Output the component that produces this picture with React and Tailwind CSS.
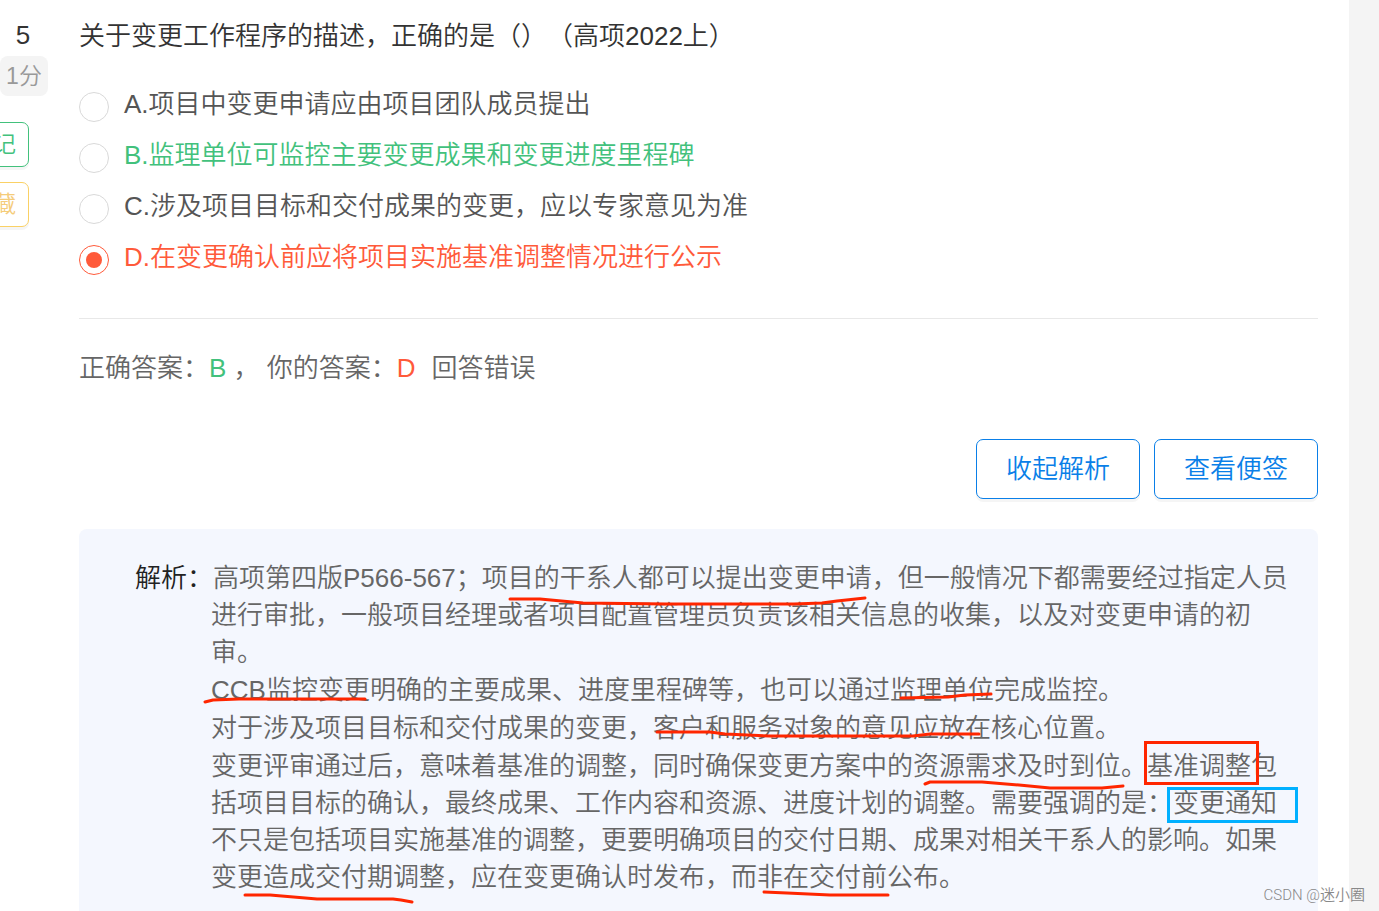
import React from 'react';
import clsx from 'clsx';

const options = [
    { key: 'A', text: '项目中变更申请应由项目团队成员提出' },
    { key: 'B', text: '监理单位可监控主要变更成果和变更进度里程碑' },
    { key: 'C', text: '涉及项目目标和交付成果的变更，应以专家意见为准' },
    { key: 'D', text: '在变更确认前应将项目实施基准调整情况进行公示' },
];

const correctAnswer = 'B';
const userAnswer = 'D';

const analysis = [
    '高项第四版P566-567；项目的干系人都可以提出变更申请，但一般情况下都需要经过指定人员进行审批，一般项目经理或者项目配置管理员负责该相关信息的收集，以及对变更申请的初审。',
    'CCB监控变更明确的主要成果、进度里程碑等，也可以通过监理单位完成监控。',
    '对于涉及项目目标和交付成果的变更，客户和服务对象的意见应放在核心位置。',
    '变更评审通过后，意味着基准的调整，同时确保变更方案中的资源需求及时到位。基准调整包括项目目标的确认，最终成果、工作内容和资源、进度计划的调整。需要强调的是：变更通知不只是包括项目实施基准的调整，更要明确项目的交付日期、成果对相关干系人的影响。如果变更造成交付期调整，应在变更确认时发布，而非在交付前公布。',
];

// Hand-drawn pen marks, relative to the analysis panel
const penStrokes = [
    'M431 70 H461 L504 74 L588 75 H715 L743 74 L758 72 L786 69',
    'M126 173 L134 171 L160 170 H286',
    'M822 169 L869 168 L886 166 L912 165',
    'M578 203 H631 L646 205 L691 207 H834 L851 205 H900',
    'M846 255 L851 253 H903 L940 256 L971 259 H1023 L1044 257',
    'M166 366 L191 366 L238 370 H314 L322 371 L333 373',
    'M685 363 L708 364 L751 366 H809',
];

const SideRail = () => (
    <aside className="flex w-12 shrink-0 flex-col items-start overflow-hidden">
        <div className="mt-4 w-full pr-[2px] text-center text-[26px] leading-[38px] text-[#333]">5</div>
        <div className="mt-[2px] h-10 w-full rounded-lg bg-[#f4f4f4] text-center text-[23px] leading-[40px] text-[#999]">
            1分
        </div>
        <button
            type="button"
            className="mt-[26px] -ml-[43px] h-[45px] w-[72px] shrink-0 rounded-[7px] border border-[#42c17c] bg-white text-[23px] leading-[43px] whitespace-nowrap text-[#42c17c] shadow-[0_3px_0_rgba(0,0,0,0.04)]"
        >
            标记
        </button>
        <button
            type="button"
            className="mt-[15px] -ml-[43px] h-[45px] w-[72px] shrink-0 rounded-[7px] border border-[#fad165] bg-white text-[23px] leading-[43px] whitespace-nowrap text-[#f5cc7a] shadow-[0_3px_0_rgba(0,0,0,0.04)]"
        >
            收藏
        </button>
    </aside>
);

const Option = ({ option }) => (
    <label
        className={clsx(
            'flex h-[51px] items-start gap-[15px]',
            option.key === correctAnswer && 'text-[#42c17c]',
            option.key === userAnswer && 'text-[#ff5a3a]',
            option.key !== correctAnswer && option.key !== userAnswer && 'text-[#555]'
        )}
    >
        <input
            type="radio"
            name="answer"
            value={option.key}
            defaultChecked={option.key === userAnswer}
            className="mt-[7px] grid size-[30px] shrink-0 appearance-none place-items-center rounded-full border border-[#d9d9d9] bg-white before:size-4 before:rounded-full checked:border-[#ff5a3a] checked:before:bg-[#ff5a3a]"
        />
        <span className="leading-[38px]">
            {option.key}.{option.text}
        </span>
    </label>
);

const ActionButton = ({ children }) => (
    <button
        type="button"
        className="h-[60px] rounded-[7px] border border-[#0a7fe8] bg-white px-[29px] text-[#0a7fe8] shadow-[0_3px_0_rgba(0,0,0,0.04)]"
    >
        {children}
    </button>
);

const Analysis = () => (
    <section className="relative flex-1 rounded-t-lg bg-[#f4f7fe] pt-[31px] pr-[18px] pb-3 pl-[132px] text-[#666]">
        <div className="flex flex-col gap-px leading-[37px]">
            {analysis.map((paragraph, index) => (
                <p key={index} className={index === 0 ? '-indent-[76px]' : undefined}>
                    {index === 0 && <span className="text-[#222]">解析：</span>}
                    {paragraph}
                </p>
            ))}
        </div>
        <svg
            className="pointer-events-none absolute inset-0 size-full overflow-visible"
            fill="none"
            strokeWidth="3"
            aria-hidden="true"
        >
            <g stroke="#ff2600" strokeLinecap="round" strokeLinejoin="round">
                {penStrokes.map((d) => (
                    <path key={d} d={d} />
                ))}
            </g>
            <rect x="1066.5" y="213.5" width="112" height="41" stroke="#ff2600" />
            <rect x="1089.5" y="259.5" width="128" height="33" stroke="#00b0ff" />
        </svg>
    </section>
);

const App = () => {
    return (
        <div className="relative flex min-h-screen bg-[#f4f4f4] pr-[30px] font-['Liberation_Sans','Noto_Sans_CJK_SC',sans-serif] text-[26px] font-[350] [text-spacing-trim:space-all]">
            <div className="flex flex-1 gap-[31px] bg-white pr-[31px]">
                <SideRail />
                <main className="flex min-w-0 flex-1 flex-col">
                    <h1 className="mt-4 leading-[40px] font-[350] text-[#333]">
                        关于变更工作程序的描述，正确的是（）（高项2022上）
                    </h1>

                    <div className="mt-[29px]">
                        {options.map((option) => (
                            <Option key={option.key} option={option} />
                        ))}
                    </div>

                    <hr className="mt-[29px] border-[#e8e8e8]" />

                    <p className="mt-[29px] leading-[40px] text-[#666]">
                        正确答案：<span className="text-[#42c17c]">B</span> ， 你的答案：
                        <span className="text-[#ff5a3a]">D</span>
                        <span className="ml-4">回答错误</span>
                    </p>

                    <div className="mt-[51px] mb-[30px] flex justify-end gap-[14px]">
                        <ActionButton>收起解析</ActionButton>
                        <ActionButton>查看便签</ActionButton>
                    </div>

                    <Analysis />
                </main>
            </div>
            <span className="absolute right-[14px] bottom-1 font-[Roboto,'Noto_Sans_CJK_SC',sans-serif] text-[15px] leading-6 text-[#888]">
                CSDN @迷小圈
            </span>
        </div>
    );
};

export default App;
